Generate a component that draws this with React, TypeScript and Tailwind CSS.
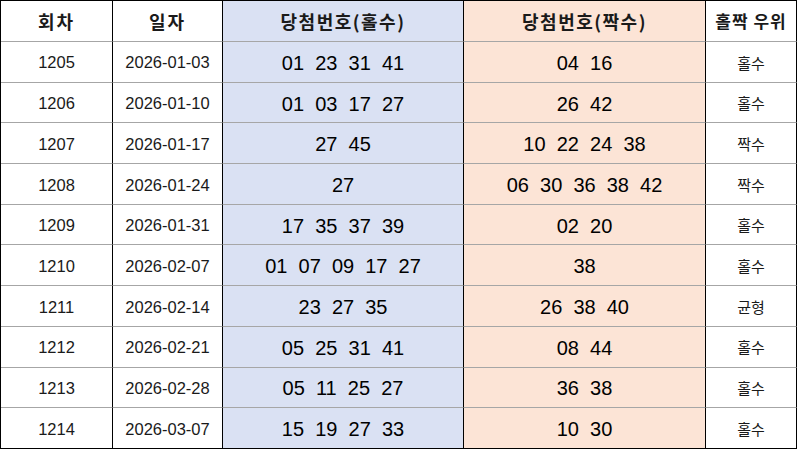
import React from "react";

type Row = { no: string; date: string; odd: string; even: string; res: string };

const rows: Row[] = [
  { no: "1205", date: "2026-01-03", odd: "01  23  31  41", even: "04  16", res: "홀수" },
  { no: "1206", date: "2026-01-10", odd: "01  03  17  27", even: "26  42", res: "홀수" },
  { no: "1207", date: "2026-01-17", odd: "27  45", even: "10  22  24  38", res: "짝수" },
  { no: "1208", date: "2026-01-24", odd: "27", even: "06  30  36  38  42", res: "짝수" },
  { no: "1209", date: "2026-01-31", odd: "17  35  37  39", even: "02  20", res: "홀수" },
  { no: "1210", date: "2026-02-07", odd: "01  07  09  17  27", even: "38", res: "홀수" },
  { no: "1211", date: "2026-02-14", odd: "23  27  35", even: "26  38  40", res: "균형" },
  { no: "1212", date: "2026-02-21", odd: "05  25  31  41", even: "08  44", res: "홀수" },
  { no: "1213", date: "2026-02-28", odd: "05  11  25  27", even: "36  38", res: "홀수" },
  { no: "1214", date: "2026-03-07", odd: "15  19  27  33", even: "10  30", res: "홀수" },
];

const font = "font-['Liberation_Sans','Noto_Sans_CJK_KR',sans-serif]";
const kfont = "font-['Noto_Sans_CJK_KR',sans-serif]";

export default function App() {
  return (
    <div className={`w-[800px] h-[450px] bg-white ${font} text-[#1a1a1a]`}>
      <div className="w-[797px] border-l border-t border-black grid grid-cols-[112px_110px_241px_242px_91px]">
        {/* header */}
        <div className={`h-[41px] flex items-center justify-center border-r border-black border-b border-b-[#a6a6a6] ${kfont} font-bold text-[18px] tracking-[2px]`}>회차</div>
        <div className={`h-[41px] flex items-center justify-center border-r border-black border-b border-b-[#a6a6a6] ${kfont} font-bold text-[18px] tracking-[2px]`}>일자</div>
        <div className={`h-[41px] flex items-center justify-center border-r border-black border-b border-b-[#a6a6a6] bg-[#dae1f3] ${kfont} font-bold text-[18px] tracking-[1.5px]`}>당첨번호(홀수)</div>
        <div className={`h-[41px] flex items-center justify-center border-r border-black border-b border-b-[#a6a6a6] bg-[#fce4d6] ${kfont} font-bold text-[18px] tracking-[1.5px]`}>당첨번호(짝수)</div>
        <div className={`h-[41px] flex items-center justify-center border-r border-black border-b border-b-[#a6a6a6] ${kfont} font-bold text-[17px] tracking-[1px]`}>홀짝 우위</div>
        {rows.map((r, i) => {
          const last = i === rows.length - 1;
          const bb = last ? "border-b border-b-black" : "border-b border-b-[#a6a6a6]";
          return (
            <React.Fragment key={r.no}>
              <div className={`h-[40.7px] pt-[2px] flex items-center justify-center border-r border-black ${bb} text-[16.5px]`}>{r.no}</div>
              <div className={`h-[40.7px] pt-[2px] flex items-center justify-center border-r border-black ${bb} text-[16.5px]`}>{r.date}</div>
              <div className={`h-[40.7px] pt-[2px] flex items-center justify-center border-r border-black ${bb} bg-[#dae1f3] text-[20px] text-black whitespace-pre`}>{r.odd}</div>
              <div className={`h-[40.7px] pt-[2px] flex items-center justify-center border-r border-black ${bb} bg-[#fce4d6] text-[20px] text-black whitespace-pre`}>{r.even}</div>
              <div className={`h-[40.7px] pt-[2px] flex items-center justify-center border-r border-black ${bb} ${kfont} text-[15px]`}>{r.res}</div>
            </React.Fragment>
          );
        })}
      </div>
    </div>
  );
}
